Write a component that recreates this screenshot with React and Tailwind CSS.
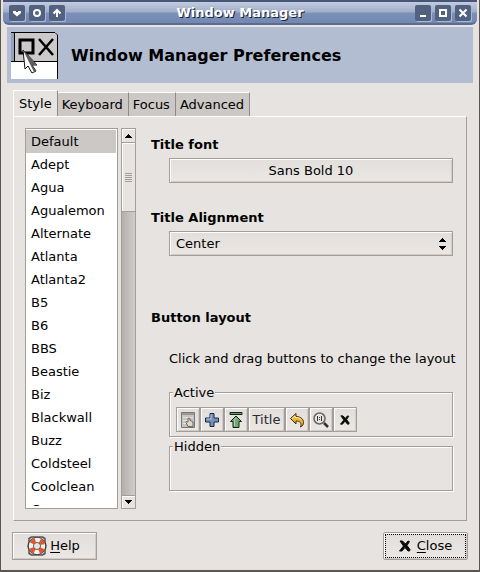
import { useRef, useState } from "react";

const THEMES = [
  "Default", "Adept", "Agua", "Agualemon", "Alternate", "Atlanta", "Atlanta2", "B5", "B6",
  "BBS", "Beastie", "Biz", "Blackwall", "Buzz", "Coldsteel", "Coolclean", "Crux",
];

const RAISED =
  "border border-[#a39e99] shadow-[inset_1px_1px_0_#ffffff,inset_-1px_-1px_0_#d0cbc6] bg-linear-to-b from-[#e1dedb] to-[#eae7e4]";

function CaptionButton({ label, children }) {
  return (
    <button
      aria-label={label}
      className="flex size-4 items-center justify-center rounded-xs bg-[#52617f] shadow-[1px_1px_0_#a9b8d2]"
    >
      <svg viewBox="0 0 10 10" className="size-2.5" fill="none" stroke="#fff" strokeWidth="2">
        {children}
      </svg>
    </button>
  );
}

function TitleBar() {
  return (
    <header className="flex h-[25px] shrink-0 items-center rounded-b-md border-t-2 border-b-2 border-t-[#46557a] border-b-[#5a6c93] bg-[linear-gradient(#c3ccdd_0%,#a0aeca_48%,#7c91b8_52%,#7288b0_100%)] px-1.5">
      <div className="flex gap-1">
        <CaptionButton label="Window menu">
          <path d="M1 3h3v1h2V3h3v2L5 8.500 1 5z" fill="#fff" stroke="none" />
        </CaptionButton>
        <CaptionButton label="Stick">
          <circle cx="5" cy="5" r="3" />
        </CaptionButton>
        <CaptionButton label="Shade">
          <path d="M5 9V2M1.500 5.500 5 2l3.500 3.500" />
        </CaptionButton>
      </div>
      <h1 className="flex-1 text-center text-[13px] leading-5 font-bold text-white [text-shadow:1px_1px_0_#1b2233]">
        Window Manager
      </h1>
      <div className="flex gap-1">
        <CaptionButton label="Minimize">
          <path d="M2 8h6" />
        </CaptionButton>
        <CaptionButton label="Maximize">
          <path d="M2 2h6v6H2z" />
        </CaptionButton>
        <CaptionButton label="Close window">
          <path d="m1.500 1.500 7 7M8.500 1.500l-7 7" />
        </CaptionButton>
      </div>
    </header>
  );
}

function AppIcon() {
  return (
    <svg viewBox="0 0 47 47" className="size-[47px] shrink-0" aria-hidden="true">
      <path d="M0 0h44l3 3v44H0z" fill="#fff" />
      <path d="M4 1h40l2 2v26H4z" fill="#cbc9c9" />
      <path d="M0 1h3v28H0z" fill="#8fa3bd" />
      <path d="M0 .500h44l2.500 2.500v44M3.500 0v29M0 29.500h46" fill="none" stroke="#000" />
      <path d="M9 8h13v13H9z" fill="none" stroke="#000" strokeWidth="3" />
      <path d="m28 7 14 16M42 7 28 23" stroke="#000" strokeWidth="2.500" />
      <path d="m12 18 14 15h-5l4 6-4 2-4-7-3 3z" fill="#fff" stroke="#111" />
      <path d="m12 18 14 15h-5l4 6-2 1-5-10z" fill="#5f5c5a" />
    </svg>
  );
}

function Arrow({ down }) {
  return (
    <svg viewBox="0 0 7 4" className="h-1 w-[7px]" aria-hidden="true" shapeRendering="crispEdges">
      <path d={down ? "M0 0h7v1H6v1H5v1H4v1H3V3H2V2H1V1H0z" : "M3 0h1v1h1v1h1v1h1v1H0V3h1V2h1V1h1z"} />
    </svg>
  );
}

function ThemeList() {
  const [selected, setSelected] = useState("Default");
  const list = useRef(null);
  const scroll = (top) => list.current.scrollBy({ top });
  return (
    <div className="flex min-h-0 gap-[3px]">
      <div className="flex w-[93px] border border-[#a39e99] bg-white pt-px pr-px pb-0.5">
        <ul ref={list} className="flex-1 overflow-hidden">
          {THEMES.map((name) => (
            <li key={name}>
              <button
                aria-pressed={name === selected}
                onClick={() => setSelected(name)}
                className="block h-[23px] w-full px-[5px] text-left aria-pressed:bg-[#cbc8c6]"
              >
                {name}
              </button>
            </li>
          ))}
        </ul>
      </div>
      <div className="flex w-[15px] flex-col border border-[#a39e99] bg-linear-to-r from-[#b3afac] to-[#cfcccb]">
        <button
          aria-label="Scroll up"
          onClick={() => scroll(-23)}
          className="flex h-[14px] shrink-0 items-center justify-center border-b border-[#a39e99] bg-[#e6e3e0] shadow-[inset_1px_1px_0_#ffffff]"
        >
          <Arrow />
        </button>
        <div className="flex h-[69px] shrink-0 flex-col items-center justify-center gap-px border-b border-[#a39e99] bg-[#e6e3e0] shadow-[inset_1px_1px_0_#ffffff]">
          {[0, 1, 2, 3, 4].map((n) => (
            <span key={n} className="h-px w-[7px] bg-[#a39e99]" />
          ))}
        </div>
        <div className="flex-1" />
        <button
          aria-label="Scroll down"
          onClick={() => scroll(23)}
          className="flex h-[13px] shrink-0 items-center justify-center border-t border-[#a39e99] bg-[#e6e3e0] shadow-[inset_1px_1px_0_#ffffff]"
        >
          <Arrow down />
        </button>
      </div>
    </div>
  );
}

function MenuIcon() {
  return (
    <svg viewBox="0 0 16 16" className="size-4">
      <path d="M1.500.500h13v15h-13z" fill="#c4c4c2" stroke="#777" />
      <path d="M2 1h12v2H2z" fill="#999" />
      <path d="M3 5.500h10M3 8.500h5M3 11.500h3" stroke="#e2e2e0" />
      <path d="M8 6.500V10l-1.500-.500-.500 1 2 4h5V10l-1.500-1L10 8.500v-2L9 6z" fill="#e3d8c8" stroke="#666" />
    </svg>
  );
}

function PlusIcon() {
  return (
    <svg viewBox="0 0 16 16" className="size-4">
      <path d="M6 1.500h4V6h4.500v4H10v4.500H6V10H1.500V6H6z" fill="#7591c0" stroke="#18263f" strokeLinejoin="round" />
      <path d="M7 7V2.500M2.500 7H7" stroke="#b4c6e2" />
    </svg>
  );
}

function ShadeIcon() {
  return (
    <svg viewBox="0 0 16 16" className="size-4">
      <path d="M2 .500h12v2H2z" fill="#6aa06a" stroke="#10240f" />
      <path d="m8 4 5.500 5.500H11v6H5v-6H2.500z" fill="#75a973" stroke="#10240f" strokeLinejoin="round" />
      <path d="M6.500 14V8.500L8 6" fill="none" stroke="#b3d3b0" />
    </svg>
  );
}

function UndoIcon() {
  return (
    <svg viewBox="0 0 16 16" className="size-4">
      <path
        d="M1.500 6.500 7 1.500v3c5 0 7.500 3 7.500 6 0 2-1 3.500-3 4.500 1.500-4-.500-6-4.500-6V12z"
        fill="#f0b232"
        stroke="#3c2a04"
        strokeLinejoin="round"
      />
      <path d="m3 6.500 3-2.500v1.500c3 0 5 .500 6 2" fill="none" stroke="#fff0b0" />
    </svg>
  );
}

function ZoomIcon() {
  return (
    <svg viewBox="0 0 16 16" className="size-4">
      <path d="m11 11 4 4" stroke="#333" strokeWidth="2.500" />
      <circle cx="6.500" cy="6.500" r="5.500" fill="#e5e5e3" stroke="#666" strokeWidth="1.500" />
      <path d="M4.500 4v5M8.500 4v5M6.500 5v1M6.500 7v1" stroke="#333" />
    </svg>
  );
}

function CrossIcon({ className }) {
  return (
    <svg viewBox="0 0 12 12" className={className} aria-hidden="true">
      <path d="M1 1h2.500l3 3L9 1l1.500.500L8 5.500l3 4-.500 1.500H9L6 7.500 3 11H.500L4.500 6z" fill="#0b0b0b" stroke="#0b0b0b" />
    </svg>
  );
}

function HelpIcon() {
  return (
    <svg viewBox="0 0 20 20" className="size-5" aria-hidden="true">
      <path d="M2 2.500 4.500 1h11L18 2.500V6l1 4-1 4v3.500L15.500 19h-11L2 17.500V14l-1-4 1-4z" fill="#d5d1cd" stroke="#555" strokeWidth="1.500" />
      <circle cx="10" cy="10" r="6" fill="#e6e3e0" stroke="#333" strokeWidth="6" />
      <circle cx="10" cy="10" r="6" fill="none" stroke="#f3f1ee" strokeWidth="4.500" />
      <g fill="none" stroke="#e2552d" strokeWidth="4.500" transform="rotate(22.500 10 10)">
        <circle cx="10" cy="10" r="6" strokeDasharray="4.700 4.725" />
      </g>
    </svg>
  );
}

const TOOLS = [
  { label: "Menu", icon: <MenuIcon /> },
  { label: "Stick", icon: <PlusIcon /> },
  { label: "Shade", icon: <ShadeIcon /> },
  { label: "Title" },
  { label: "Hide", icon: <UndoIcon /> },
  { label: "Maximize", icon: <ZoomIcon /> },
  { label: "Close", icon: <CrossIcon className="size-2.5" /> },
];

function LayoutGroup({ title, children }) {
  return (
    <fieldset className="h-[53px] min-w-0 border border-[#a39e99] px-1.5 shadow-[1px_1px_0_#ffffff,inset_1px_1px_0_#ffffff]">
      <legend className="-ml-[3px] h-4 bg-[#e6e3e0] px-px leading-[18px]">{title}</legend>
      {children}
    </fieldset>
  );
}

function StylePage() {
  return (
    <div className="flex min-w-0 flex-1 flex-col pt-[7px]">
      <h3 id="font-label" className="h-[23px] leading-5 font-bold">Title font</h3>
      <button aria-describedby="font-label" className={`ml-[18px] h-[25px] ${RAISED}`}>
        Sans Bold 10
      </button>
      <label htmlFor="alignment" className="mt-[25px] h-[23px] leading-5 font-bold">Title Alignment</label>
      <div className="relative ml-[18px]">
        <select id="alignment" defaultValue="Center" className={`h-[25px] w-full appearance-none rounded-none px-1.5 ${RAISED}`}>
          <option>Left</option>
          <option>Center</option>
          <option>Right</option>
        </select>
        <span className="pointer-events-none absolute inset-y-0 right-[7px] flex flex-col justify-center gap-1">
          <Arrow />
          <Arrow down />
        </span>
      </div>
      <h3 className="mt-[52px] leading-5 font-bold">Button layout</h3>
      <div className="mt-[21px] ml-[18px] flex flex-col">
        <p className="leading-5 whitespace-nowrap">Click and drag buttons to change the layout</p>
        <div className="mt-[15px] flex flex-col gap-px">
          <LayoutGroup title="Active">
            <div className="mt-[7px] flex">
              {TOOLS.map(({ label, icon }) => (
                <button
                  key={label}
                  aria-label={label}
                  draggable
                  className={
                    "flex h-[25px] items-center justify-center text-[#2b2b2b] " +
                    (icon ? "w-6 " : "w-[37px] ") +
                    RAISED
                  }
                >
                  {icon || label}
                </button>
              ))}
            </div>
          </LayoutGroup>
          <LayoutGroup title="Hidden" />
        </div>
      </div>
    </div>
  );
}

const TABS = ["Style", "Keyboard", "Focus", "Advanced"];

export default function App() {
  const [tab, setTab] = useState("Style");
  return (
    <div className="flex h-screen flex-col overflow-hidden border-x border-b-2 border-[#5c5653] bg-[#e6e3e0] px-0.5 text-[13px] leading-5 text-black [font-family:'DejaVu_Sans',sans-serif]">
      <TitleBar />
      <div className="mx-1 mt-0.5 flex h-14 shrink-0 items-center gap-[13px] bg-[#b2bdd2] px-1">
        <AppIcon />
        <h2 className="pt-0.5 text-base font-bold">Window Manager Preferences</h2>
      </div>
      <main className="mx-2.5 mt-[7px] flex min-h-0 flex-1 flex-col">
        <div role="tablist" className="flex h-[26px] shrink-0 items-end">
          {TABS.map((name) => (
            <button
              key={name}
              role="tab"
              aria-selected={tab === name}
              onClick={() => setTab(name)}
              className="h-6 border-t border-r border-t-white border-r-[#8f8a87] bg-[#cbc8c6] pr-[5px] pl-1 aria-selected:-mb-px aria-selected:h-[27px] aria-selected:border-l aria-selected:border-l-white aria-selected:bg-[#e6e3e0] aria-selected:pl-[5px]"
            >
              {name}
            </button>
          ))}
        </div>
        <section className="flex min-h-0 flex-1 gap-[15px] border border-t-white border-r-[#a39e99] border-b-[#a39e99] border-l-white py-[11px] pr-[13px] pl-[11px]">
          <ThemeList />
          <StylePage />
        </section>
      </main>
      <footer className="mx-[9px] mt-[11px] mb-2.5 flex shrink-0 justify-between">
        <button className={`flex h-7 w-[85px] items-center justify-center gap-[3px] pr-0.5 ${RAISED}`}>
          <HelpIcon />
          <span><u className="underline-offset-2">H</u>elp</span>
        </button>
        <button className={`flex h-7 w-[85px] items-center justify-center rounded-xs p-px ${RAISED}`}>
          <span className="flex size-full items-center justify-center gap-1.5 border border-dotted border-black">
            <CrossIcon className="size-3" />
            <span><u className="underline-offset-2">C</u>lose</span>
          </span>
        </button>
      </footer>
    </div>
  );
}
